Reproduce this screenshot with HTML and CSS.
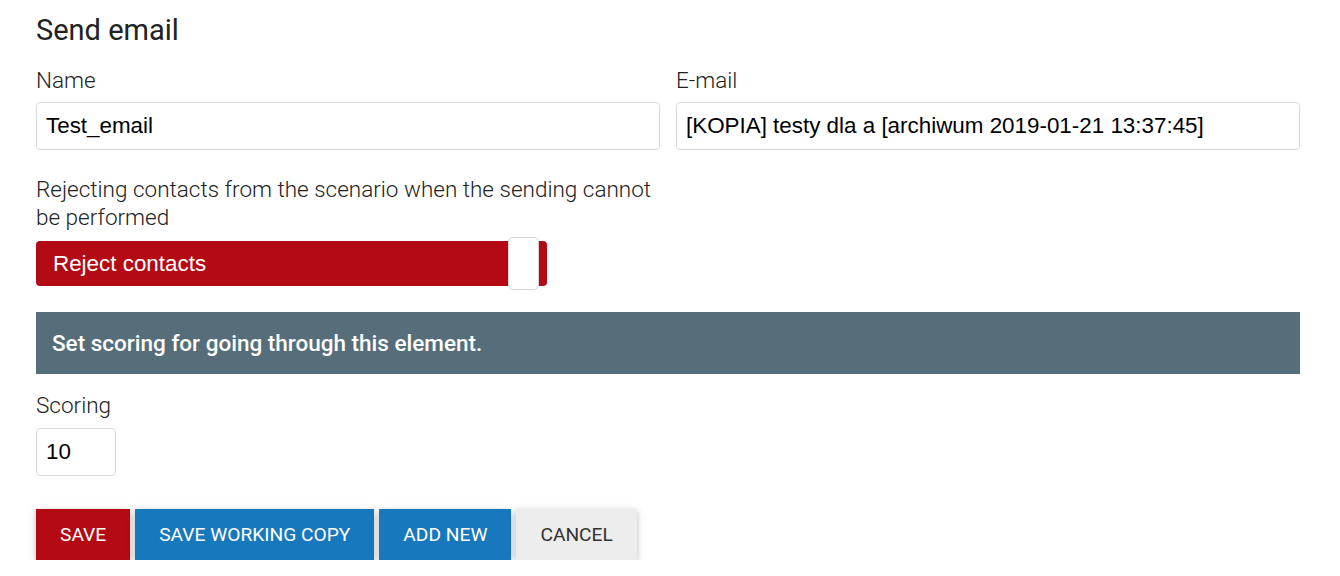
FILE: index.html
```html
<!DOCTYPE html>
<html lang="en">
<head>
<meta charset="utf-8">
<title>Send email</title>
<link rel="stylesheet" href="styles.css">
</head>
<body>
<div class="page">
  <h1 class="title">Send email</h1>
  <div class="row">
    <div class="field">
      <label class="label">Name</label>
      <div class="input">Test_email</div>
    </div>
    <div class="field">
      <label class="label">E-mail</label>
      <div class="input">[KOPIA] testy dla a [archiwum 2019-01-21 13:37:45]</div>
    </div>
  </div>
  <div class="row reject-row">
    <div class="field">
      <label class="label">Rejecting contacts from the scenario when the sending cannot be performed</label>
      <div class="toggle">
        <span class="toggle-text">Reject contacts</span>
        <span class="toggle-knob"></span>
      </div>
    </div>
  </div>
  <div class="banner">Set scoring for going through this element.</div>
  <div class="field scoring">
    <label class="label">Scoring</label>
    <div class="input input-small">10</div>
  </div>
  <div class="actions">
    <button class="btn btn-red">Save</button>
    <button class="btn btn-blue">Save working copy</button>
    <button class="btn btn-blue">Add new</button>
    <button class="btn btn-grey">Cancel</button>
  </div>
</div>
</body>
</html>
```
FILE: styles.css
```css
* { box-sizing: border-box; }
html, body { margin: 0; padding: 0; background: #fff; }
.page {
  padding: 12px 40px 0 36px;
  font-family: Roboto, "Liberation Sans", sans-serif;
  color: #333;
}
.title {
  margin: 0;
  font-size: 29px;
  font-weight: 400;
  line-height: 36px;
  color: #222;
}
.row {
  display: grid;
  grid-template-columns: 1fr 1fr;
  column-gap: 16px;
  margin-top: 18px;
}
.field { display: flex; flex-direction: column; }
.label {
  font-size: 22.5px;
  line-height: 28px;
  font-weight: 300;
  color: #222;
  margin-bottom: 8px;
}
.input {
  height: 48px;
  border: 1px solid #d9d9d9;
  border-radius: 4px;
  padding: 0 9px;
  display: flex;
  align-items: center;
  font-family: "Liberation Sans", Arial, sans-serif;
  font-size: 22.4px;
  color: #000;
}
.reject-row { margin-top: 25px; }
.reject-row .label { margin-bottom: 10px; }
.toggle {
  width: 511px;
  height: 45px;
  background: #b40a14;
  border-radius: 4px;
  display: flex;
  align-items: center;
  padding: 0 8px 0 17px;
}
.toggle-text {
  flex: 1;
  color: #fff;
  font-family: "Liberation Sans", Arial, sans-serif;
  font-size: 22.4px;
}
.toggle-knob {
  width: 31px;
  height: 53px;
  background: #fff;
  border: 1px solid #d6d6d6;
  border-radius: 5px;
  flex: none;
}
.banner {
  margin-top: 26px;
  height: 62px;
  background: #566e7a;
  color: #fff;
  display: flex;
  align-items: center;
  padding-left: 16px;
  font-size: 22.5px;
  font-weight: 500;
}
.scoring { margin-top: 17px; }
.scoring .label { margin-bottom: 9px; }
.input-small { width: 80px; }
.actions {
  display: flex;
  gap: 5px;
  margin-top: 33px;
}
.btn {
  height: 51px;
  border: none;
  border-radius: 0;
  padding: 0 24px;
  font-family: Roboto, sans-serif;
  font-size: 19.2px;
  font-weight: 400;
  text-transform: uppercase;
  color: #fff;
  box-shadow: 0 2px 5px 0 rgba(0,0,0,.16), 0 2px 10px 0 rgba(0,0,0,.12);
}
.btn-red { background: #b40a14; }
.btn-blue { background: #1878bd; }
.btn-grey { background: #ededed; color: #333; }
```
